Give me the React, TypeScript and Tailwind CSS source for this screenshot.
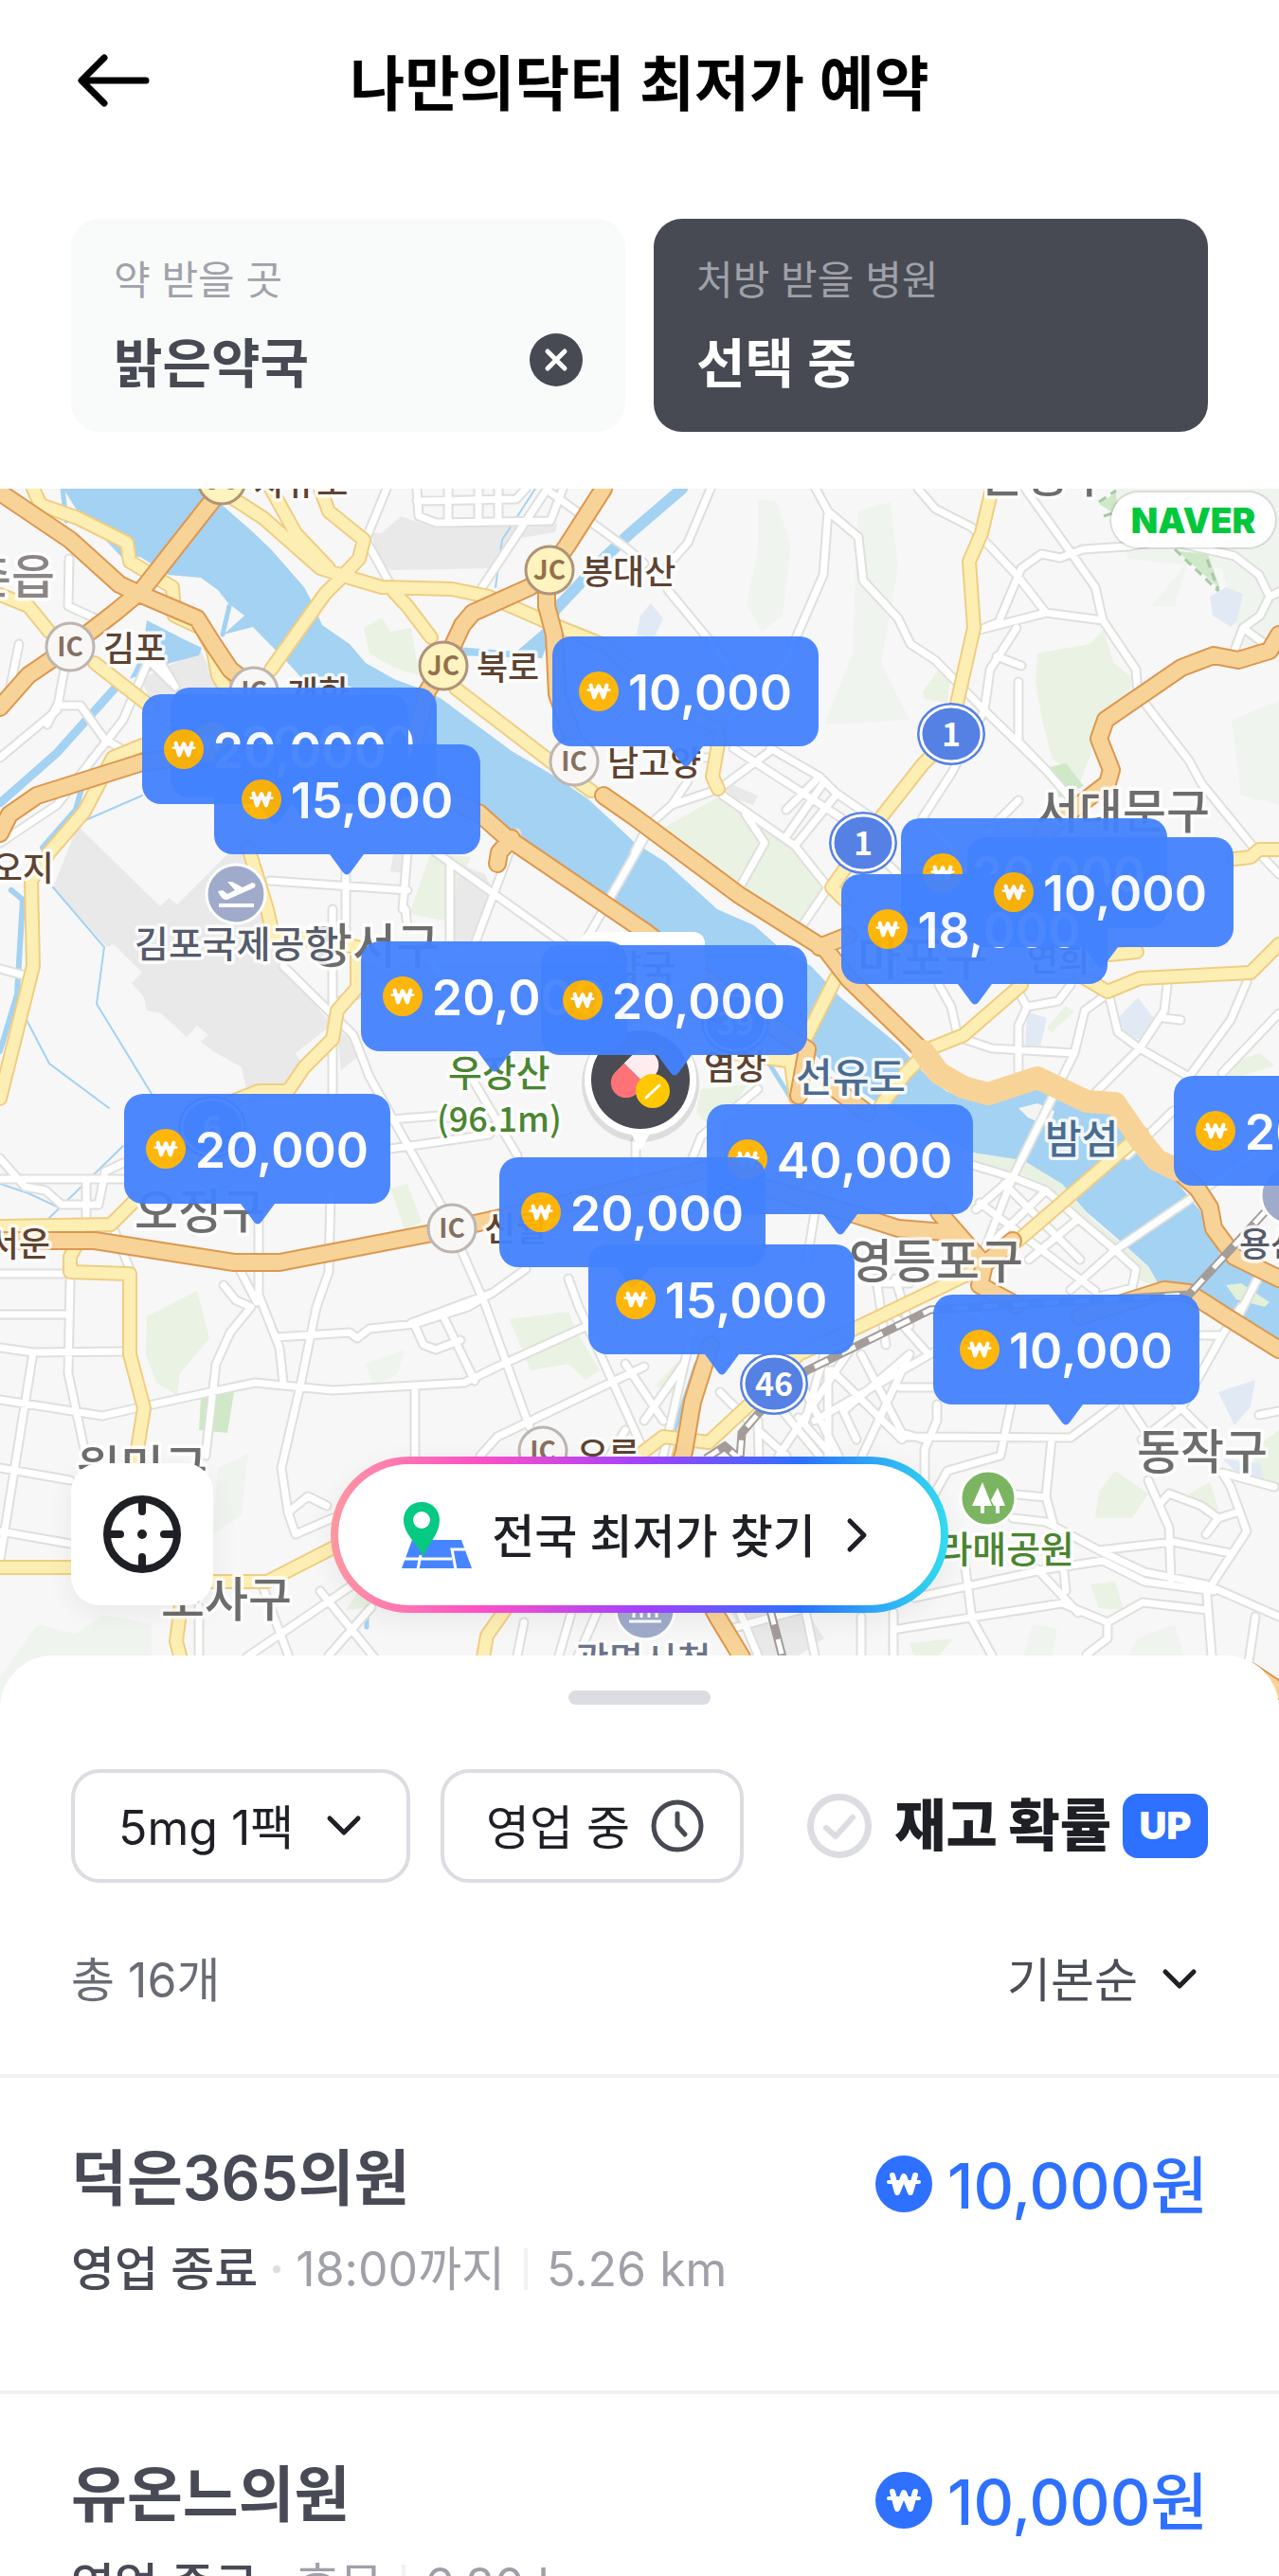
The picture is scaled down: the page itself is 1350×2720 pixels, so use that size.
import React, { useState } from "react";

type Point = { x: number; y: number };

type Pin = Point & { price: string };

type MapLabel = Point & {
    text: string;
    size: number;
    color: string;
    anchor?: "start" | "end";
};

type Clinic = {
    name: string;
    status: string;
    hours: string;
    distance: string;
    price: string;
};

const MAP_TOP = 516;
const MAP_WIDTH = 1350;

const pins: Pin[] = [
    { x: 180, y: 726, price: "20,000" },
    { x: 150, y: 733, price: "20,000" },
    { x: 226, y: 786, price: "15,000" },
    { x: 583, y: 672, price: "10,000" },
    { x: 951, y: 864, price: "20,000" },
    { x: 888, y: 923, price: "18,000" },
    { x: 1021, y: 884, price: "10,000" },
    { x: 381, y: 994, price: "20,000" },
    { x: 571, y: 998, price: "20,000" },
    { x: 131, y: 1155, price: "20,000" },
    { x: 1239, y: 1136, price: "20,000" },
    { x: 746, y: 1166, price: "40,000" },
    { x: 527, y: 1222, price: "20,000" },
    { x: 621, y: 1314, price: "15,000" },
    { x: 985, y: 1367, price: "10,000" },
];

const clinics: Clinic[] = [
    { name: "덕은365의원", status: "영업 종료", hours: "18:00까지", distance: "5.26 km", price: "10,000원" },
    { name: "유온느의원", status: "영업 종료", hours: "휴무", distance: "6.80 km", price: "10,000원" },
];

const whiteRoads = [
    "M440 516L442 545L460 552L581 550L594 516M440 529L545 527L555 516M473 516V550M505 516V550M526 516V550",
    "M408 516L386 570L412 617M577 517L507 623M577 517L663 580L680 595",
    "M750 516L726 573L705 597V623L752 680L790 735",
    "M861 516L874 540L906 567L911 613L948 653L961 680L987 697L1039 750L1104 813L1130 843",
    "M874 540L869 607L830 697L804 727L770 760",
    "M969 516L987 537L1026 557L1073 607L1104 647M1034 665L1104 647L1164 655",
    "M1082 516L1130 583L1156 620L1164 655L1199 707L1201 733L1255 803L1268 827L1325 897L1350 923",
    "M1034 665L1054 657L1078 600L1099 585L1119 589L1143 580L1190 577L1229 570L1303 587L1329 607L1340 630L1330 650L1312 663L1303 687M1340 630L1350 625M1312 663L1335 680",
    "M1073 663L1045 707L1039 750L1004 817L974 863M1052 693L1078 703M1075 720V783L1104 813",
    "M1201 733L1232 720L1245 705M974 863L1010 900M1075 845L1040 880",
    "M670 900L683 873L709 850L759 833L813 793M774 790L887 863L948 923M813 790L865 820L882 837L930 870",
    "M763 840L839 893L874 937L843 983M882 840L839 893M830 883L869 827M787 860L807 890L783 933M865 820L830 855",
    "M720 790L726 825L709 850M700 800H750",
    "M991 1040L1004 1063L1010 1090M1017 1097L1047 1107L1134 1112M1071 1040L1084 1063L1117 1057L1130 1040M1084 1063L1075 1083V1130",
    "M1164 1053L1145 1067L1134 1112L1069 1243L1039 1320M1171 1053L1180 1090L1203 1107L1255 1137",
    "M1232 1040L1229 1067L1203 1107L1150 1160M1229 1075L1246 1077M1316 1037L1299 1077L1255 1137M1350 1070L1290 1133M1238 1173L1190 1220",
    "M1026 1230L1069 1243L1104 1257L1138 1287L1177 1320L1199 1340L1195 1360L1156 1370M1069 1243L1030 1277M1104 1257L1039 1320",
    "M1138 1287L1086 1330M1177 1320L1130 1362M1350 1200L1255 1267L1177 1320M1034 1270L1156 1363M1060 1250L1140 1330",
    "M1329 1347L1307 1390",
    "M0 1023L26 1030M351 960V1160M351 1060L377 1050M299 1020L373 1093L390 1137L468 1277L512 1377L559 1507",
    "M0 1245H130M0 1223L26 1253L48 1257L65 1272H104L111 1237L130 1228M91 1247V1296",
    "M412 1213L516 1198L530 1180M412 1182L464 1178L520 1190M499 1140L546 1220M349 1260L347 1343L334 1380L317 1463L297 1550L304 1597L312 1620L351 1603",
    "M273 1280V1367L295 1423L299 1460M236 1357L249 1373L265 1380L243 1407L228 1440L217 1537M249 1333L271 1375M217 1290L205 1300",
    "M0 1345H70M74 1353L72 1450L89 1530M0 1388H72M121 1300L137 1340",
    "M434 1397L520 1365L555 1340M0 1423L35 1428L134 1427M35 1428L0 1647",
    "M0 1478L108 1495L152 1485L221 1470L269 1460L351 1468L490 1460L525 1443L620 1400",
    "M291 1412L369 1407L377 1413L390 1403L438 1398L494 1380L520 1365M438 1400L447 1420L460 1425L486 1415M468 1390L501 1458",
    "M438 1463V1538M600 1350L611 1380L680 1533M507 1537L525 1517L680 1443M660 1510L630 1560M0 1550L74 1563M0 1617L74 1630",
    "M210 1697V1750M278 1677L304 1747M260 1750L373 1673M338 1680L395 1750M392 1697L347 1748M304 1597L325 1580L345 1590",
    "M553 1713L546 1748M603 1703L590 1748M630 1703L605 1760M430 980L428 960M475 1040L440 1000M545 880L500 1000M680 885L620 990M475 915L475 1000",
    "M460 900L600 1000M365 910V990M285 930L430 940M430 900L425 960",
    "M989 1483V1500L976 1530V1570M956 1517L1130 1518L1177 1483M909 1430L952 1513L976 1520M1067 1483L1056 1537L1000 1553L985 1580",
    "M1110 1520L1104 1580L1112 1610M1073 1578L1104 1581M1069 1603L1104 1607L1160 1637L1208 1660L1273 1673L1350 1707",
    "M1160 1637L1238 1628L1299 1640M965 1687L1104 1657L1164 1648L1208 1670L1281 1680M948 1720L1121 1693L1169 1713V1730L1147 1747",
    "M1169 1713L1206 1692L1275 1700M1273 1673L1279 1748M1281 1670L1316 1617L1299 1570L1290 1555L1345 1570M1212 1563L1234 1613L1236 1670",
    "M1225 1587L1234 1577L1268 1590L1286 1603L1273 1620M1286 1603L1305 1597M1190 1483L1208 1510M1290 1410L1247 1487L1205 1520M1268 1410H1290L1310 1380",
    "M1017 1640L1026 1710L1047 1748M1095 1657L1138 1703M1121 1640L1125 1680M943 1703V1750M909 1707V1748M1325 1707L1318 1755M1350 1490L1329 1494M1240 1480L1270 1510",
    "M843 1497L878 1537M896 1427L822 1537M874 1447V1537M826 1490L865 1537M800 1510L830 1537M878 1447L952 1520M904 1520L890 1490L960 1430M835 1440L885 1537M987 1427L860 1500",
    "M940 1385L980 1430M900 1400L870 1430L850 1500M950 1465H985M910 1537L960 1430M1020 1380L1040 1395M800 1500L801 1537M760 1470L790 1500",
    "M925 1350L935 1420M945 1350L960 1400M925 1355H960M660 1440L700 1500M735 1385L700 1537M722 1440L680 1500M655 1537L700 1560",
    "M860 1280L852 1330M700 1700L790 1680M770 1720L880 1690M780 1700L800 1748M850 1700L860 1748M671 1205V1240M720 1250L740 1200L800 1150",
    "M0 800L60 750L73 680M20 680L8 740M73 590L72 640L105 655L130 640M150 690L180 720M0 890L60 850L130 760M50 765L60 745L85 745L110 780L160 810M130 760L160 690M170 700L185 725",
];

const yellowRoads = [
    "M35 516L43 533L82 547L134 573L137 593L182 620L184 650L212 663L225 687L230 713L245 740",
    "M0 628L30 640L52 667M100 700L160 747M247 527L278 547L338 600L369 610L403 620L477 622L516 630L585 660L640 682L700 740L759 770",
    "M286 516L312 563L347 600M338 516L347 540L384 570L379 590L360 610L343 627L286 707",
    "M416 625L430 640L455 673M481 727L585 807L624 835M759 780L752 820L758 833",
    "M150 787L119 800L89 857L52 900L33 930L35 1020L0 1160",
    "M262 895L282 960L288 987L377 1000V1043L356 1067L351 1097L321 1127L304 1152H273L240 1165M143 1267L117 1293L0 1295M87 1303L74 1327V1343L137 1345V1430L152 1487L145 1530V1580",
    "M191 1695L186 1733L191 1752M0 1655H90M215 1670H282L360 1630M533 1700L514 1727L510 1750",
    "M1047 516L1036 563L1023 593L1028 663L1010 743L1004 777L974 807L930 863L911 890L878 937L891 950",
    "M882 1033L852 1093L835 1123L840 1160M760 1110L830 1120M1078 1040L1017 1093L982 1107L956 1133L930 1167",
    "M1140 1030L1169 1047L1203 1033L1320 1027L1350 997M1150 1010L1200 1005M1303 907L1320 905L1329 897H1350M1205 1197L1078 1307L1039 1337L904 1402L843 1430L791 1483L748 1523L700 1517L674 1537",
    "M650 1300L745 1285L830 1270L860 1250M745 1430L700 1600",
];

const orangeRoads = [
    "M0 520L74 570L126 617L147 627L208 653L225 680L243 707L256 717L300 770L505 858L533 883L680 983L780 1060L852 1108L843 1157",
    "M234 516L150 623L121 647L95 667L74 683L30 713L0 747M637 516L598 577L580 602L559 620L499 647L488 660L468 703L451 730L430 810",
    "M577 627V640L585 670L588 733L605 780M637 840L670 863L780 945L872 1003L895 1033L974 1110L991 1133L1017 1148L1043 1155L1095 1138L1147 1163L1177 1165L1203 1203L1221 1225L1242 1235L1264 1255L1277 1275L1281 1297L1303 1327L1350 1350",
    "M865 1000L895 988M1350 670L1340 687L1307 697L1281 692L1247 705L1167 760L1160 780L1173 813L1169 827L1100 880",
    "M0 880L10 860L39 840L150 805L260 790M540 885L527 900L525 912",
    "M0 1310H100L247 1333H295L451 1303L600 1270L745 1235L904 1283L948 1297L1010 1302M991 1280L1039 1335L1034 1357L1073 1378M1039 1335L1069 1310M1140 1390L1229 1362L1255 1365L1294 1390L1350 1425",
    "M750 1420L731 1480L722 1533L700 1600L757 1707L783 1750M878 1147L915 1175M1320 1765L1350 1785",
];

const railways = "M1335 1280L1255 1367L982 1383L852 1447L800 1493L783 1513L781 1540M813 1700L826 1750M745 1540L765 1527L780 1540";

const JC = { fill: "#fff3bf", stroke: "#b09478", color: "#94704a" };
const IC = { fill: "#f9f7f5", stroke: "#bdb5b0", color: "#857060" };

const junctions = [
    { x: 234, y: 507, text: "JC", ...JC },
    { x: 580, y: 602, text: "JC", ...JC },
    { x: 468, y: 703, text: "JC", ...JC },
    { x: 74, y: 683, text: "IC", ...IC },
    { x: 268, y: 730, text: "IC", ...IC },
    { x: 606, y: 804, text: "IC", ...IC },
    { x: 477, y: 1297, text: "IC", ...IC },
    { x: 573, y: 1532, text: "IC", ...IC },
];

const shields = [
    { x: 1004, y: 775, text: "1" },
    { x: 911, y: 890, text: "1" },
    { x: 817, y: 1461, text: "46" },
    { x: 224, y: 1190, text: "6" },
    { x: 776, y: 1080, text: "39" },
];

const BROWN = "#5e4331";
const DISTRICT = "#6d6d6d";
const GREEN = "#4a8531";
const ISLAND = "#4b6c90";

const mapLabels: MapLabel[] = [
    { x: 58, y: 627, text: "고촌읍", size: 50, color: "#8b8585", anchor: "end" },
    { x: 268, y: 523, text: "자유로", size: 36, color: BROWN },
    { x: 109, y: 698, text: "김포", size: 36, color: BROWN },
    { x: 303, y: 745, text: "개화", size: 36, color: BROWN },
    { x: 503, y: 718, text: "북로", size: 36, color: BROWN },
    { x: 614, y: 617, text: "봉대산", size: 36, color: BROWN },
    { x: 641, y: 819, text: "남고양", size: 36, color: BROWN },
    { x: 57, y: 930, text: "벌오지", size: 36, color: BROWN, anchor: "end" },
    { x: 53, y: 1327, text: "서운", size: 36, color: BROWN, anchor: "end" },
    { x: 511, y: 1311, text: "신월", size: 36, color: BROWN },
    { x: 743, y: 1140, text: "염창", size: 36, color: BROWN },
    { x: 609, y: 1549, text: "오류", size: 36, color: BROWN },
    { x: 1084, y: 1026, text: "연희", size: 36, color: BROWN },
    { x: 464, y: 1017, text: "강서구", size: 50, color: DISTRICT, anchor: "end" },
    { x: 142, y: 1011, text: "김포국제공항", size: 39, color: "#565b6b" },
    { x: 1035, y: 520, text: "은평구", size: 50, color: DISTRICT },
    { x: 1093, y: 875, text: "서대문구", size: 50, color: DISTRICT },
    { x: 905, y: 1030, text: "마포구", size: 50, color: DISTRICT },
    { x: 142, y: 1297, text: "오정구", size: 50, color: DISTRICT },
    { x: 896, y: 1350, text: "영등포구", size: 50, color: DISTRICT },
    { x: 1200, y: 1551, text: "동작구", size: 50, color: DISTRICT },
    { x: 81, y: 1568, text: "원미구", size: 50, color: DISTRICT },
    { x: 170, y: 1707, text: "소사구", size: 50, color: DISTRICT },
    { x: 473, y: 1147, text: "우장산", size: 39, color: GREEN },
    { x: 461, y: 1195, text: "(96.1m)", size: 36, color: GREEN },
    { x: 1134, y: 1650, text: "보라매공원", size: 39, color: GREEN, anchor: "end" },
    { x: 840, y: 1153, text: "선유도", size: 42, color: ISLAND },
    { x: 1103, y: 1218, text: "밤섬", size: 42, color: ISLAND },
    { x: 1308, y: 1327, text: "용산역", size: 36, color: "#565b6b" },
    { x: 607, y: 1767, text: "광명시청", size: 39, color: "#6b7488" },
];

const WonSign = ({ className }: { className: string }) => (
    <svg viewBox="0 0 60 60" className={className} aria-hidden="true">
        <circle cx="30" cy="30" r="30" fill="currentColor" />
        <path
            d="M18 21L23 39L30 22L37 39L42 21"
            fill="none"
            stroke="#fff"
            strokeWidth="6"
            strokeLinecap="round"
            strokeLinejoin="round"
        />
        <path d="M14 28H46" stroke="#fff" strokeWidth="4" strokeLinecap="round" />
    </svg>
);

const ChevronDown = ({ className }: { className: string }) => (
    <svg viewBox="0 0 40 24" className={className} fill="none" aria-hidden="true">
        <path d="M5 4L20 19L35 4" stroke="#1e2025" strokeWidth="5" strokeLinecap="round" strokeLinejoin="round" />
    </svg>
);

const Roads = ({ roads, edge, fill, width }: { roads: string[]; edge: string; fill: string; width: number }) => (
    <g fill="none" strokeLinecap="round" strokeLinejoin="round">
        <path d={roads.join("")} stroke={edge} strokeWidth={width} />
        <path d={roads.join("")} stroke={fill} strokeWidth={width - 4} />
    </g>
);

const MapDrawing = () => (
    <svg
        viewBox="0 516 1350 1290"
        preserveAspectRatio="xMidYMin slice"
        className="absolute inset-0 size-full"
        fontFamily='"Noto Sans CJK KR", sans-serif'
        aria-hidden="true"
    >
        <rect x="0" y="516" width="1350" height="1290" fill="#f7f7f7" />

        {/* hills and parks */}
        <g fill="#f0f4ef">
            <path d="M800 527L820 530L835 577L826 650L804 667L788 637L800 580Z" />
            <path d="M905 540L940 530L948 600L930 700L960 760L870 765L900 690Z" />
            <path d="M1175 516H1350V700L1310 680L1290 600L1190 590Z" />
            <path d="M1240 610L1255 590L1240 640L1215 640Z" />
            <path d="M1300 760L1350 740V850L1310 840Z" />
            <path d="M0 1770L40 1715L80 1725L110 1705L160 1715V1800H0Z" />
            <path d="M230 1550L262 1535L255 1600L225 1620ZM385 1440L427 1425L420 1450L395 1465Z" />
            <path d="M1090 1715L1116 1720L1110 1750H1080ZM1200 1730L1240 1715L1250 1750H1190Z" />
        </g>
        <g fill="#eaf2e3">
            <path d="M384 663L403 652L412 667L434 663L442 713L416 705L390 690Z" />
            <path d="M690 880L757 842L850 905L872 940L845 985L800 970L760 930L720 900Z" />
            <path d="M1095 690L1150 680L1165 665L1175 700L1195 715L1190 745L1160 755L1150 800L1140 825L1110 800L1100 760L1093 720Z" />
            <path d="M974 730L991 707L1003 712L1000 742L975 738Z" />
            <path d="M455 900L497 905L468 972L432 965Z" />
            <path d="M155 1390L208 1363L221 1413L190 1450L187 1473L165 1460L154 1430Z" />
            <path d="M538 1393L600 1385L608 1405L633 1447L618 1457L600 1440L560 1447Z" />
            <path d="M692 1463L722 1430L713 1473Z" />
            <path d="M412 1255L430 1250L445 1290L428 1300Z" />
            <path d="M1177 1553L1212 1577L1195 1603L1156 1603L1160 1575Z" />
            <path d="M1255 1577L1277 1565L1286 1593L1270 1600Z" />
            <path d="M1151 1673L1177 1670L1186 1700L1160 1698Z" />
            <path d="M960 1735L1006 1730L990 1750H965Z" />
            <path d="M740 1150L790 1145L775 1165L745 1185L735 1175Z" />
            <path d="M1290 1125L1330 1112L1345 1125L1300 1140Z" />
            <path d="M1323 1530L1350 1510V1570L1325 1560Z" />
            <path d="M1105 1085L1125 1062L1134 1068L1110 1090Z" />
            <path d="M365 1700L385 1670L392 1697Z" />
        </g>
        <g fill="#cfe8c8">
            <path d="M212 1475L247 1470L240 1513L210 1510Z" />
            <path d="M1108 810L1125 806L1144 830L1118 842Z" />
            <path d="M1243 582L1275 585L1288 622Z" />
            <path d="M1160 532L1178 520L1180 545Z" />
        </g>
        <path d="M1240 580L1286 624L1272 584M1160 530L1178 518M1165 545L1180 540" fill="none" stroke="#a8c8a8" strokeWidth="3" strokeDasharray="9 6" />

        {/* built-up areas */}
        <g fill="#e9e9e9">
            <path d="M392 563H403L423 545L460 558L588 553L586 562L538 570L518 600L412 602L399 590Z" />
            <path d="M82 872L169 957L178 948L187 955L250 892L265 905L286 980L299 1020L350 1082L312 1112L321 1127L304 1150H260L255 1127L225 1110L212 1100L220 1093L208 1083L197 1095L170 1070L155 1067L152 1053L139 1038L150 1027L120 997L113 1000L56 937Z" />
            <path d="M148 717L212 687L225 715L250 740H160ZM416 897L435 900L432 923L412 920Z" />
            <path d="M486 913L512 923L520 940L505 1000H470ZM765 825L800 840L795 850L765 840Z" />
            <path d="M355 1085L385 1110L360 1130ZM770 1700H850L870 1730L840 1750H800Z" />
        </g>
        <g fill="#e1eaf4">
            <path d="M1277 630L1294 620L1312 627L1306 655L1299 662L1280 650Z" />
            <path d="M672 670L676 650L687 637L700 653L690 675Z" />
            <path d="M1180 1075L1201 1053L1220 1078L1212 1098L1190 1096Z" />
            <path d="M1084 1068L1105 1075L1098 1105H1082Z" />
            <path d="M1286 1470L1325 1457L1320 1485L1303 1505Z" />
            <path d="M1290 1540L1330 1545L1335 1565L1310 1560Z" />
        </g>

        {/* Han river */}
        <path
            d="M67 516L80 537L130 590L148 588L178 607L212 610L230 623L241 637L258 650L236 670L267 662L304 700L340 740L505 855L680 980L780 1055L852 1107L890 1140L930 1167L1026 1217L1073 1225L1121 1250L1147 1280L1182 1310L1212 1337L1225 1360L1255 1366L1299 1403L1350 1430V1350L1290 1330L1268 1280L1238 1243L1216 1227L1190 1183L1147 1167L1095 1147L1043 1160L1000 1153L982 1140L948 1103L887 1053L856 1020L822 1000L796 977L757 960L702 910L670 890L663 883L620 843L581 817L540 793L466 738L451 730L416 717L386 700L369 680L340 660L330 637L321 620L286 580L265 560L234 533L215 516Z"
            fill="#a4d2f2"
        />
        <path d="M155 655L200 678L213 684L210 692L180 700L137 717L150 690Z" fill="#a4d2f2" />
        <path d="M481 683L545 688L572 665L585 643L600 625L572 695L481 692Z" fill="#a4d2f2" />
        <g fill="none" stroke="#a4d2f2" strokeLinecap="round">
            <path d="M720 516L663 565L637 590L585 645" strokeWidth="12" />
            <path d="M121 727L60 795L0 848" strokeWidth="9" />
            <path d="M66 516L70 550M235 670L242 640" strokeWidth="5" />
            <path d="M12 940L24 950L18 1050L0 1110M95 800L80 855L45 895" strokeWidth="6" />
            <path d="M88 867L150 840M56 937L110 1000L102 1060L160 1155M26 1073L52 1123L115 1170M565 516L530 570L523 620M130 1210L50 1288M0 1250L30 1260L62 1275" strokeWidth="2" />
            <path d="M810 1120L835 1160M735 1440L712 1510M387 1700V1718M872 1440L875 1452" strokeWidth="5" />
        </g>
        <path d="M1075 1170L1095 1165L1113 1173L1108 1190L1085 1180Z" fill="#f4f4f2" />
        <path d="M1026 1217L1080 1225L1121 1250L1150 1285L1212 1337L1225 1360L1200 1350L1130 1275L1080 1240L1026 1228Z" fill="#e8f1e2" />
        <path d="M1294 1357L1310 1355L1340 1375L1335 1380L1305 1372Z" fill="#e3f0d8" />

        <Roads roads={whiteRoads} edge="#dfdfdd" fill="#ffffff" width={11} />
        <Roads roads={yellowRoads} edge="#f0cd83" fill="#fdefb4" width={16} />
        <Roads roads={orangeRoads} edge="#dc9850" fill="#f8d398" width={20} />

        {/* the riverside expressway runs wider here */}
        <path
            d="M974 1110L991 1133L1017 1148L1043 1155L1095 1138L1147 1163L1177 1165L1203 1203L1221 1225L1242 1235"
            fill="none"
            stroke="#f8d398"
            strokeWidth="24"
            strokeLinecap="round"
            strokeLinejoin="round"
        />

        {/* railway */}
        <g fill="none">
            <path d={railways} stroke="#a39c98" strokeWidth="9" />
            <path d={railways} stroke="#ffffff" strokeWidth="5" strokeDasharray="16 16" />
        </g>

        {mapLabels.map((label) => (
            <text
                key={label.text}
                x={label.x}
                y={label.y}
                fontSize={label.size}
                fontWeight="500"
                fill={label.color}
                textAnchor={label.anchor ?? "start"}
                stroke="#ffffff"
                strokeOpacity="0.85"
                strokeWidth="7"
                strokeLinejoin="round"
                paintOrder="stroke"
            >
                {label.text}
            </text>
        ))}

        {junctions.map((j) => (
            <g key={`${j.x}-${j.y}`}>
                <circle cx={j.x} cy={j.y} r="25" fill={j.fill} stroke={j.stroke} strokeWidth="3" />
                <text x={j.x} y={j.y + 10} fontSize="28" fontWeight="700" fill={j.color} textAnchor="middle">
                    {j.text}
                </text>
            </g>
        ))}

        {shields.map((s) => (
            <g key={`${s.x}-${s.y}`}>
                <ellipse cx={s.x} cy={s.y} rx="36" ry="33" fill="#5580e4" />
                <ellipse cx={s.x} cy={s.y} rx="32" ry="29" fill="none" stroke="#ffffff" strokeWidth="3" />
                <text x={s.x} y={s.y + 13} fontSize="34" fontWeight="700" fill="#ffffff" textAnchor="middle">
                    {s.text}
                </text>
            </g>
        ))}

        {/* airport */}
        <circle cx="249" cy="944" r="31" fill="#a0abcb" stroke="#ffffff" strokeWidth="3" />
        <path d="M231 956H268" stroke="#ffffff" strokeWidth="4" />
        <path d="M230 941L235 940L240 944L248 940L240 931L245 931L256 937L266 932Q271 932 269 937L240 950Q234 951 230 941Z" fill="#ffffff" />

        {/* city hall */}
        <circle cx="681" cy="1700" r="31" fill="#a0abcb" stroke="#ffffff" strokeWidth="3" />
        <path d="M664 1712H698M669 1708V1690M677 1708V1690M685 1708V1690M693 1708V1690" stroke="#ffffff" strokeWidth="3" />
        <circle cx="1362" cy="1262" r="31" fill="#a0abcb" stroke="#ffffff" strokeWidth="3" />

        {/* park */}
        <circle cx="1043" cy="1582" r="29" fill="#7cb562" stroke="#ffffff" strokeWidth="3" />
        <path d="M1037 1565L1047 1590H1039V1598H1035V1590H1026ZM1053 1571L1061 1590H1055V1598H1051V1590H1049L1046 1584Z" fill="#ffffff" />
    </svg>
);

const PharmacyMarker = () => (
    <svg viewBox="0 0 160 240" className="absolute inset-0 size-full" aria-hidden="true">
        <rect x="16" y="4" width="132" height="60" rx="12" fill="#ffffff" />
        <text x="117" y="56" fontSize="39" fontWeight="500" fill="#474a53" textAnchor="end">
            약국
        </text>
        <circle cx="80" cy="164" r="62" fill="#000000" opacity="0.1" />
        <path d="M68 212H92L83 231Q80 236 77 231Z" fill="#ffffff" />
        <circle cx="80" cy="160" r="59" fill="#ffffff" />
        <circle cx="80" cy="160" r="52" fill="#4a4b53" />
        <g transform="rotate(45 74 154)">
            <path d="M58 154V141A16 16 0 0 1 90 141V154Z" fill="#ffecef" />
            <path d="M58 154V167A16 16 0 0 0 90 167V154Z" fill="#ff7378" />
        </g>
        <circle cx="93" cy="172" r="18" fill="#ffc800" />
        <path d="M86 179L100 166" stroke="#ffffff" strokeWidth="3" strokeLinecap="round" />
    </svg>
);

const PricePin = ({ pin }: { pin: Pin }) => (
    <button
        type="button"
        className="absolute flex h-[116px] w-[281px] items-center justify-center gap-[10px] rounded-[20px] bg-[#4382ff] opacity-95"
        style={{ left: `${(pin.x / MAP_WIDTH) * 100}%`, top: pin.y - MAP_TOP }}
    >
        <WonSign className="size-[42px] shrink-0 text-[#ffb300]" />
        <span className="pt-1 text-[52px] font-semibold leading-none text-white">{pin.price}</span>
        <svg viewBox="0 0 36 22" className="absolute left-1/2 top-full h-[22px] w-9 -translate-x-1/2" aria-hidden="true">
            <path d="M0 0H36L22 19Q18 24 14 19Z" fill="#4382ff" />
        </svg>
    </button>
);

const ClinicRow = ({ clinic }: { clinic: Clinic }) => (
    <li className="flex items-start justify-between border-t-4 border-[#f1f2f4] px-[75px] pb-24 pt-[66px]">
        <div>
            <h2 className="text-[64px] font-semibold leading-[80px] text-[#484b55]">{clinic.name}</h2>
            <div className="mt-6 flex items-center text-[50px] leading-[64px] text-[#9fa0a8]">
                <span className="font-medium text-[#484b55]">{clinic.status}</span>
                <span className="mx-4 size-2 rounded-full bg-[#dcdde2]" />
                <span>{clinic.hours}</span>
                <span className="mx-5 h-11 w-1 bg-[#f1f2f4]" />
                <span>{clinic.distance}</span>
            </div>
        </div>
        <div className="mt-1 flex items-center gap-4">
            <WonSign className="size-[60px] text-[#2e70ff]" />
            <span className="pt-1 text-[66px] font-medium leading-[80px] text-[#2e70ff]">{clinic.price}</span>
        </div>
    </li>
);

export default function App() {
    const [onlyInStock, setOnlyInStock] = useState(false);

    const handleStock = (e: React.ChangeEvent<HTMLInputElement>) => {
        setOnlyInStock(e.target.checked);
    };

    return (
        <div className="h-screen overflow-hidden bg-white font-[Inter,'Noto_Sans_CJK_KR',sans-serif]">
            <header className="relative flex h-[171px] items-center justify-center">
                <button type="button" aria-label="뒤로" className="absolute left-[75px] top-[42px]">
                    <svg viewBox="0 0 90 86" className="h-[86px] w-[90px]" fill="none">
                        <path
                            d="M79 43H12M35 19L11 43L35 67"
                            stroke="#000"
                            strokeWidth="7"
                            strokeLinecap="round"
                            strokeLinejoin="round"
                        />
                    </svg>
                </button>
                <h1 className="pt-1 text-[63px] font-semibold leading-[80px] text-black">나만의닥터 최저가 예약</h1>
            </header>

            <div className="grid grid-cols-2 gap-[30px] px-[75px] pb-[60px] pt-[60px]">
                <div className="flex h-[225px] items-end justify-between rounded-[30px] bg-[#f9fbfa] px-[45px] pb-8">
                    <div>
                        <p className="text-[42px] leading-[56px] text-[#a1a2a9]">약 받을 곳</p>
                        <p className="mt-5 text-[56px] font-semibold leading-[80px] text-[#474a53]">밝은약국</p>
                    </div>
                    <button type="button" aria-label="지우기" className="mb-4">
                        <svg viewBox="0 0 56 56" className="size-14">
                            <circle cx="28" cy="28" r="28" fill="#474a53" />
                            <path d="M19 19L37 37M37 19L19 37" stroke="#fff" strokeWidth="5" strokeLinecap="round" />
                        </svg>
                    </button>
                </div>
                <div className="flex h-[225px] items-end rounded-[30px] bg-[#474a53] px-[45px] pb-8">
                    <div>
                        <p className="text-[42px] leading-[56px] text-[#9fa0a8]">처방 받을 병원</p>
                        <p className="mt-5 text-[56px] font-semibold leading-[80px] text-white">선택 중</p>
                    </div>
                </div>
            </div>

            <section className="relative h-[1290px] overflow-hidden bg-[#f7f7f7]">
                <MapDrawing />
                <div className="absolute left-[596px] top-[464px] h-[240px] w-[160px]">
                    <PharmacyMarker />
                </div>
                {pins.map((pin) => (
                    <PricePin key={`${pin.x}-${pin.y}`} pin={pin} />
                ))}
                <div className="absolute right-1 top-1 flex h-[58px] w-[173px] items-center justify-center rounded-full bg-white text-[37px] font-black leading-none text-[#03c73c] ring-2 ring-black/10">
                    NAVER
                </div>
                <button
                    type="button"
                    aria-label="현재 위치"
                    className="absolute left-[75px] top-[1029px] flex size-[150px] items-center justify-center rounded-[30px] bg-white shadow-[0_8px_30px_rgba(0,0,0,0.06)]"
                >
                    <svg viewBox="0 0 84 84" className="size-[84px]" fill="none" stroke="#1e2025" strokeWidth="8" strokeLinecap="round">
                        <circle cx="42" cy="42" r="37" />
                        <path d="M42 8V18M42 66V76M8 42H19M65 42H76" />
                        <circle cx="42" cy="42" r="5" fill="#1e2025" stroke="none" />
                    </svg>
                </button>
                <div className="absolute inset-x-0 top-[1022px] flex justify-center">
                    <button
                        type="button"
                        className="rounded-full bg-[linear-gradient(90deg,#fd98a0_0%,#ff4fc5_24%,#a041ff_51%,#2b70ff_76%,#32dcee_100%)] p-2 shadow-[0_8px_30px_rgba(0,0,0,0.06)]"
                    >
                        <span className="flex h-[149px] items-center rounded-full bg-white pl-[66px] pr-[76px]">
                            <svg viewBox="0 0 76 72" className="h-[72px] w-[76px]" aria-hidden="true">
                                <path d="M12 41H64L75 71H1Z" fill="#4785ff" />
                                <path d="M4 61H54M21 57L18 72M68 51H54L58 72" fill="none" stroke="#fff" strokeWidth="3" />
                                <path d="M22 1C11 1 3 9 3 20C3 34 16 44 24 58C30 44 41 34 41 20C41 9 33 1 22 1Z" fill="#06c983" />
                                <circle cx="22" cy="20" r="9" fill="#fff" />
                            </svg>
                            <span className="ml-5 pt-1 text-[49px] font-medium leading-[64px] text-[#1e2025]">
                                전국 최저가 찾기
                            </span>
                            <svg viewBox="0 0 24 40" className="ml-8 h-10 w-6" fill="none" aria-hidden="true">
                                <path d="M4 5L19 20L4 35" stroke="#1e2025" strokeWidth="5" strokeLinecap="round" strokeLinejoin="round" />
                            </svg>
                        </span>
                    </button>
                </div>
            </section>

            <main className="relative -mt-[58px] rounded-t-[56px] bg-white pt-[37px]">
                <div className="mx-auto h-[15px] w-[150px] rounded-full bg-[#dcdde2]" />

                <div className="mt-[68px] flex items-center px-[75px]">
                    <div className="relative h-[120px] w-[358px]">
                        <select
                            aria-label="용량"
                            className="size-full appearance-none rounded-[30px] border-4 border-[#dcdde2] bg-white pl-[46px] pt-1 text-[50px] text-[#1e2025]"
                        >
                            <option>5mg 1팩</option>
                        </select>
                        <ChevronDown className="pointer-events-none absolute right-[50px] top-12 h-6 w-10" />
                    </div>
                    <button
                        type="button"
                        className="ml-8 flex h-[120px] w-[320px] items-center justify-end gap-5 rounded-[30px] border-4 border-[#dcdde2] pr-9 text-[50px] text-[#1e2025]"
                    >
                        <span className="pt-1">영업 중</span>
                        <svg viewBox="0 0 60 60" className="size-[60px]" fill="none" stroke="#474a53" strokeWidth="5" strokeLinecap="round" strokeLinejoin="round">
                            <circle cx="30" cy="30" r="25" />
                            <path d="M30 17V30L38 39" />
                        </svg>
                    </button>
                    <label className="ml-auto flex items-center">
                        <span className="relative flex size-[68px]">
                            <input
                                type="checkbox"
                                checked={onlyInStock}
                                onChange={handleStock}
                                className="size-full appearance-none rounded-full border-[7px] border-[#dcdde2] checked:border-[#2e70ff]"
                            />
                            <svg viewBox="0 0 68 68" className="pointer-events-none absolute inset-0 size-full" fill="none">
                                <path d="M20 36L30 45L48 25" stroke="#dcdde2" strokeWidth="6" strokeLinecap="round" strokeLinejoin="round" />
                            </svg>
                        </span>
                        <span className="ml-6 text-[59px] font-black leading-[68px] text-[#1e2025]">재고 확률</span>
                        <span className="ml-3 flex h-[68px] w-[90px] items-center justify-center rounded-2xl bg-[#2e70ff] text-[40px] font-black leading-none text-white">
                            UP
                        </span>
                    </label>
                </div>

                <div className="flex h-[202px] items-center justify-between px-[75px] text-[50px]">
                    <p className="pt-1 text-[#696c75]">총 16개</p>
                    <div className="relative">
                        <select aria-label="정렬" className="appearance-none bg-white pr-[74px] pt-1 text-[#4b4e57]">
                            <option>기본순</option>
                        </select>
                        <ChevronDown className="pointer-events-none absolute right-[10px] top-7 h-6 w-10" />
                    </div>
                </div>

                <ul>
                    {clinics.map((clinic) => (
                        <ClinicRow key={clinic.name} clinic={clinic} />
                    ))}
                </ul>
            </main>
        </div>
    );
}
